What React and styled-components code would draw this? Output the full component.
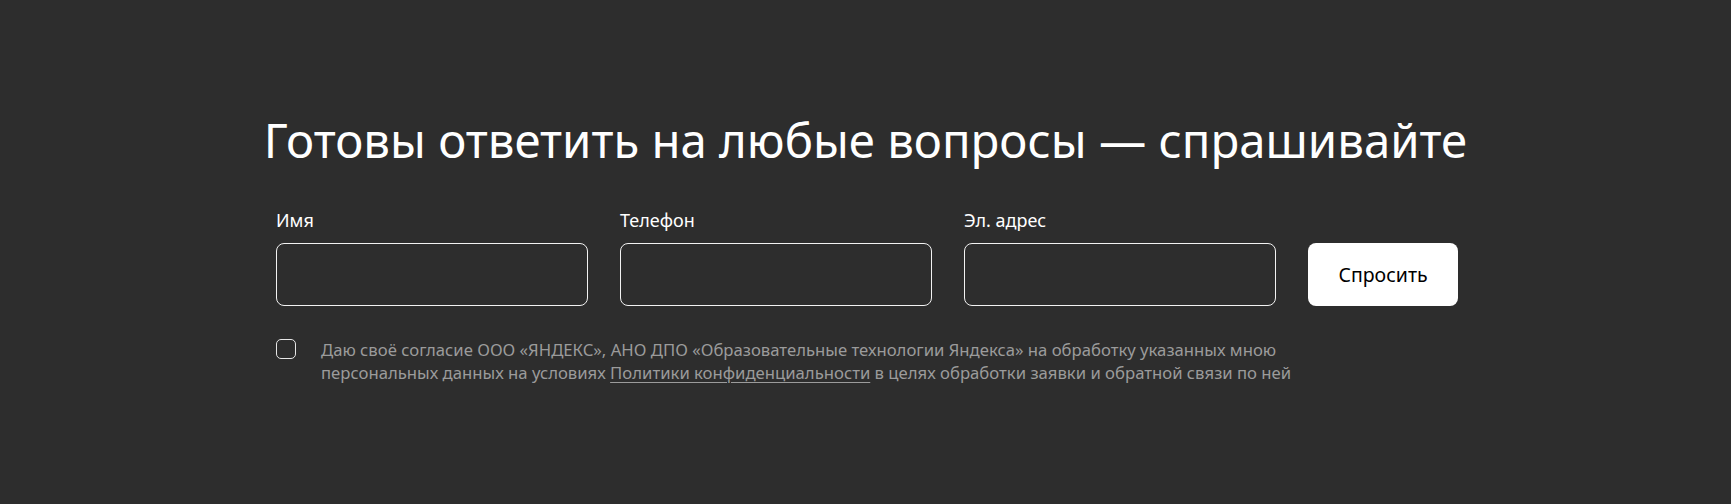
import React, { useState } from "react";
import styled, { createGlobalStyle } from "styled-components";

const Global = createGlobalStyle`
  html, body { margin: 0; padding: 0; background: #2d2d2d; }
  body { font-family: "Noto Sans", "Open Sans", sans-serif; }
  * { box-sizing: border-box; }
`;

const Section = styled.section`
  width: 100%;
  height: 504px;
  background: #2d2d2d;
  display: flex;
  flex-direction: column;
  align-items: center;
  padding-top: 112px;
`;

const Title = styled.h2`
  margin: 0;
  color: #ffffff;
  font-weight: 400;
  font-size: 47.3px;
  line-height: 56px;
  text-align: center;
  white-space: nowrap;
`;

const Inner = styled.div`
  width: 1182px;
  margin-left: 3px;
  display: flex;
  flex-direction: column;
`;

const Form = styled.form`
  margin-top: 41px;
  display: flex;
  align-items: flex-end;
  gap: 32px;
`;

const Field = styled.label`
  display: flex;
  flex-direction: column;
  gap: 12px;
  width: 312px;
`;

const Label = styled.span`
  color: #ffffff;
  font-size: 18px;
  line-height: 22px;
`;

const Input = styled.input`
  height: 63px;
  width: 100%;
  border: 1px solid #f2f2f2;
  border-radius: 8px;
  background: transparent;
  color: #fff;
  font: inherit;
  font-size: 18px;
  padding: 0 16px;
  outline: none;
`;

const Button = styled.button`
  height: 63px;
  width: 150px;
  border: none;
  border-radius: 8px;
  background: #ffffff;
  color: #000;
  font-family: inherit;
  font-size: 19.5px;
  cursor: pointer;
`;

const Consent = styled.div`
  margin-top: 32px;
  display: flex;
  align-items: flex-start;
  gap: 25px;
`;

const Box = styled.span`
  flex: none;
  width: 20px;
  height: 20px;
  margin-top: 1px;
  border: 1px solid #e6e6e6;
  border-radius: 5px;
  cursor: pointer;
  background: ${(p) => (p.$on ? "#fff" : "transparent")};
`;

const ConsentText = styled.p`
  margin: 0;
  width: 1000px;
  color: #9b9b9b;
  font-size: 16.7px;
  line-height: 23px;
`;

const Link = styled.a`
  color: inherit;
  text-decoration: underline;
  text-underline-offset: 3px;
`;

export default function App() {
  const [on, setOn] = useState(false);
  return (
    <>
      <Global />
      <Section>
        <Title>Готовы ответить на любые вопросы — спрашивайте</Title>
        <Inner>
          <Form onSubmit={(e) => e.preventDefault()}>
            <Field>
              <Label>Имя</Label>
              <Input type="text" />
            </Field>
            <Field>
              <Label>Телефон</Label>
              <Input type="tel" />
            </Field>
            <Field>
              <Label>Эл. адрес</Label>
              <Input type="email" />
            </Field>
            <Button type="submit">Спросить</Button>
          </Form>
          <Consent>
            <Box $on={on} onClick={() => setOn(!on)} />
            <ConsentText>
              Даю своё согласие ООО «ЯНДЕКС», АНО ДПО «Образовательные технологии Яндекса» на обработку указанных мною
              <br />
              персональных данных на условиях <Link href="#">Политики конфиденциальности</Link> в целях обработки заявки и обратной связи по ней
            </ConsentText>
          </Consent>
        </Inner>
      </Section>
    </>
  );
}
